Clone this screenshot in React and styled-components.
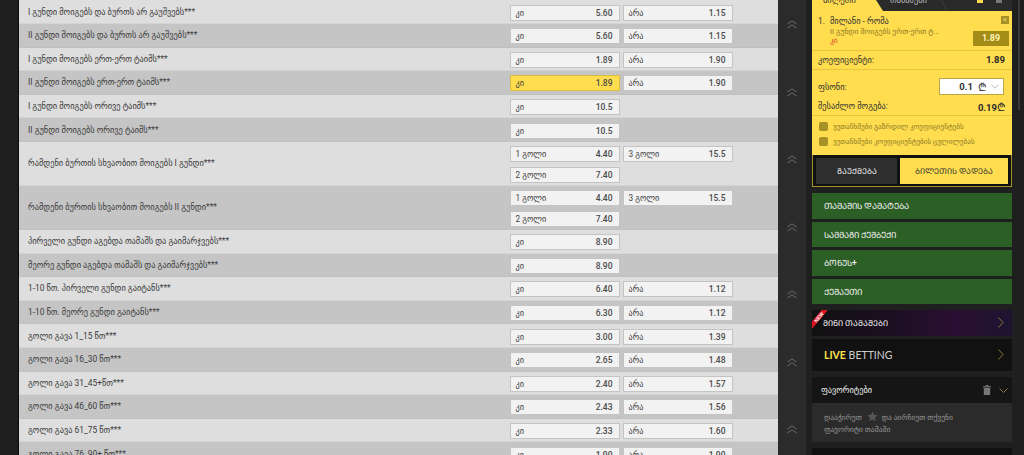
import React from 'react';
import styled, { createGlobalStyle } from 'styled-components';

const GlobalStyle = createGlobalStyle`
  html, body {
    margin: 0;
    padding: 0;
    height: 455px;
    overflow: hidden;
    background: #1f1f1f;
    font-family: Roboto, "DejaVu Sans", sans-serif;
  }
  * { box-sizing: border-box; }
`;

const Page = styled.div`
  display: flex;
  width: 1024px;
  height: 455px;
  overflow: hidden;
`;

const LeftRail = styled.div`
  width: 19px;
  flex: none;
  background: #1e1e1e;
  border-right: 1px solid #0c0c0c;
`;

const Table = styled.div`
  width: 759px;
  flex: none;
  padding-top: 0.4px;
`;

const Row = styled.div`
  display: flex;
  align-items: center;
  height: ${(p) => (p.$tall ? '44px' : '23.6px')};
  padding-top: 2px;
  background: ${(p) => (p.$dark ? '#c5c5c5' : '#dedede')};
  border-bottom: 1px solid ${(p) => (p.$dark ? '#c0c0c0' : '#d4d4d4')};
`;

const Title = styled.div`
  width: 490.5px;
  flex: none;
  padding: 0 0 2px 9px;
  font-size: 8.4px;
  color: #3c3c3c;
  white-space: nowrap;
`;

const Cells = styled.div`
  display: grid;
  grid-template-columns: 110px 110px;
  column-gap: 3px;
  row-gap: 4.5px;
`;

const Cell = styled.div`
  display: flex;
  align-items: center;
  justify-content: space-between;
  height: 16px;
  padding: 0 6px 0 5px;
  background: ${(p) => (p.$active ? '#ffdd4f' : '#f2f2f2')};
  border: 1px solid ${(p) => (p.$active ? '#d9bd45' : '#c4c4c4')};
  font-size: 8.2px;
  color: #444;
`;

const Odd = styled.span`
  font-size: 8.5px;
  font-weight: 500;
  color: #4a4a4a;
`;

const ArrowColumn = styled.div`
  width: 28px;
  flex: none;
  background: #2b2b2b;
  padding-top: 14px;
  display: flex;
  flex-direction: column;
`;

const ArrowSlot = styled.div`
  height: 67.5px;
  flex: none;
  padding-left: 9px;
  color: #5e5e5e;
`;

const Sidebar = styled.div`
  width: 218px;
  flex: none;
  display: flex;
  background: #1f1f1f;
`;

const SideColumn = styled.div`
  width: 200px;
  flex: none;
  margin-left: 6px;
  display: flex;
  flex-direction: column;
`;

const ScrollTrack = styled.div`
  width: 2px;
  height: 110px;
  flex: none;
  margin-left: 6px;
  background: #3a3a3a;
`;

const Tabs = styled.div`
  position: relative;
  height: 11px;
  flex: none;
  background: #2a2a2a;
  overflow: hidden;
`;

const TabYellow = styled.div`
  position: absolute;
  left: 0;
  top: 0;
  width: 71px;
  height: 11px;
  background: #ffdd4f;
  clip-path: polygon(0 0, 64px 0, 71px 100%, 0 100%);
`;

const TabDivider = styled.div`
  position: absolute;
  left: 129px;
  top: 0;
  width: 6px;
  height: 11px;
  background: #3c3c3c;
  clip-path: polygon(0 0, 1px 0, 6px 100%, 5px 100%);
`;

const TabLabel = styled.span`
  position: absolute;
  left: ${(p) => p.$left}px;
  top: -5px;
  font-size: 8.4px;
  color: ${(p) => p.$color};
  white-space: nowrap;
`;

const TabIcon = styled.span`
  position: absolute;
  left: ${(p) => p.$left}px;
  top: -3px;
  width: 6px;
  height: 6px;
  background: ${(p) => p.$color};
`;

const Slip = styled.div`
  background: #ffdd4f;
  color: #333;
  flex: none;
`;

const SlipItem = styled.div`
  position: relative;
  height: 39.5px;
  padding: 5px 6px 0;
  border-bottom: 1px solid #e6c53f;
  font-size: 8.4px;
  white-space: nowrap;
`;

const Match = styled.div`
  display: flex;
  gap: 5px;
  color: #333;
`;

const Market = styled.div`
  padding-left: 12px;
  margin-top: 1px;
  font-size: 7.6px;
  color: #8d7a24;
`;

const Pick = styled.div`
  padding-left: 12px;
  font-size: 7.6px;
  color: #d8452a;
`;

const Remove = styled.span`
  position: absolute;
  right: 3px;
  top: 5px;
  width: 8px;
  height: 8px;
  background: #a79127;
  color: #e8d16a;
  font-size: 8px;
  line-height: 8px;
  text-align: center;
`;

const SlipOdd = styled.span`
  position: absolute;
  right: 3px;
  top: 20px;
  width: 36px;
  height: 15px;
  background: #a38c17;
  color: #fff2b5;
  font-size: 9px;
  font-weight: 700;
  line-height: 15px;
  text-align: center;
`;

const SlipLine = styled.div`
  display: flex;
  align-items: center;
  justify-content: space-between;
  height: ${(p) => p.$h}px;
  padding: ${(p) => p.$pt || 0}px 7px 0 6px;
  border-bottom: ${(p) => (p.$line ? '1px solid #e6c53f' : 'none')};
  font-size: 8.4px;
  color: #333;
`;

const Strong = styled.span`
  font-size: 9.5px;
  font-weight: 700;
  color: #2a2a2a;
`;

const Lari = styled.span`
  font-family: "DejaVu Sans", sans-serif;
  font-size: 11px;
  font-weight: 400;
`;

const StakeBox = styled.div`
  display: flex;
  align-items: center;
  width: 65px;
  height: 17px;
  margin-right: 1px;
  padding: 0 4px;
  background: #fff;
  border: 1px solid #b9a54a;
  font-size: 9.5px;
  font-weight: 700;
  color: #333;
`;

const StakeValue = styled.span`
  flex: 1;
  text-align: right;
  margin-right: 5px;
`;

const StakeGap = styled.span`
  width: 5px;
`;

const Terms = styled.div`
  display: flex;
  flex-direction: column;
  gap: 6px;
  height: 40px;
  padding: 6px 0 0 7px;
  border-top: 1px solid #e6c53f;
`;

const Term = styled.div`
  display: flex;
  align-items: center;
  gap: 5px;
  height: 9px;
  font-size: 7.2px;
  color: #8d7a24;
  white-space: nowrap;
`;

const Check = styled.span`
  width: 9px;
  height: 9px;
  flex: none;
  border-radius: 2px;
  background: #a79127;
`;

const SlipActions = styled.div`
  display: flex;
  gap: 3px;
  height: 32px;
  padding: 3px 3px 2px;
  background: #111;
  border: 1px solid #a79127;
  border-top: none;
  flex: none;
`;

const ActionButton = styled.div`
  flex: ${(p) => (p.$primary ? '108' : '81')};
  display: flex;
  align-items: center;
  justify-content: center;
  background: ${(p) => (p.$primary ? '#ffdd4f' : '#2e2e2e')};
  color: ${(p) => (p.$primary ? '#333' : '#eee')};
  font-size: 8px;
  font-weight: 500;
`;

const GreenList = styled.div`
  display: flex;
  flex-direction: column;
  gap: 3.1px;
  margin-top: 6.5px;
`;

const GreenButton = styled.div`
  height: 25.5px;
  display: flex;
  align-items: center;
  padding-left: 12px;
  background: #2c5f26;
  color: #f2f2f2;
  font-size: 8.5px;
  font-weight: 500;
`;

const Banner = styled.div`
  position: relative;
  display: flex;
  align-items: center;
  justify-content: space-between;
  height: ${(p) => p.$h}px;
  margin-top: ${(p) => p.$mt}px;
  padding: 0 8px 0 ${(p) => p.$pl}px;
  background: ${(p) => p.$bg};
  overflow: hidden;
  flex: none;
`;

const BannerText = styled.span`
  color: #f4f4f4;
  font-size: 8px;
  font-weight: 500;
`;

const LiveText = styled.span`
  color: #cfcfcf;
  font-family: Lato, sans-serif;
  font-size: 10.5px;
`;

const LiveAccent = styled.b`
  color: #ffe14d;
`;

const NewRibbon = styled.div`
  position: absolute;
  left: 0;
  top: 0;
  width: 16px;
  height: 19px;
  background: #e01522;
  clip-path: polygon(0 62%, 0 100%, 100% 0, 62% 0);
`;

const NewLabel = styled.span`
  position: absolute;
  left: 1px;
  top: 4px;
  font-family: "Liberation Sans", sans-serif;
  font-size: 5px;
  font-weight: 700;
  color: #fff;
  transform: rotate(-50deg);
`;

const FavHeader = styled.div`
  display: flex;
  align-items: center;
  height: 25.5px;
  margin-top: 6.5px;
  padding: 0 4px 0 9px;
  background: #151515;
  color: #eee;
  font-size: 8.3px;
  flex: none;
`;

const FavTitle = styled.span`
  flex: 1;
`;

const FavBody = styled.div`
  height: 39px;
  padding: 8px 12px 0;
  background: #2b2b2b;
  color: #999;
  font-size: 7.6px;
  line-height: 12px;
  white-space: nowrap;
  flex: none;
`;

const FavStar = styled.svg`
  margin: 0 4px 0 5px;
  vertical-align: -2px;
`;

const FavBottom = styled.div`
  height: 20px;
  margin-top: 6px;
  background: #111;
  flex: none;
`;

const TrashIcon = styled.svg`
  margin-right: 8px;
`;

const DoubleUp = () => (
  <svg width="10" height="9" viewBox="0 0 10 9" fill="none" stroke="currentColor" strokeWidth="1.1">
    <path d="M0.5 4 L5 0.8 L9.5 4" />
    <path d="M0.5 8 L5 4.8 L9.5 8" />
  </svg>
);

const Chevron = ({ color }) => (
  <svg width="6" height="11" viewBox="0 0 6 11" fill="none" stroke={color} strokeWidth="1">
    <path d="M0.5 0.5 L5 5.5 L0.5 10.5" />
  </svg>
);

const ChevronDown = ({ color, w = 9 }) => (
  <svg width={w} height="5" viewBox="0 0 9 5" fill="none" stroke={color} strokeWidth="1">
    <path d="M0.5 0.5 L4.5 4.5 L8.5 0.5" />
  </svg>
);

const Trash = () => (
  <TrashIcon width="8" height="10" viewBox="0 0 8 10" fill="#777">
    <rect x="0" y="1.2" width="8" height="1.2" />
    <rect x="2.5" y="0" width="3" height="1.2" />
    <rect x="0.8" y="3" width="6.4" height="7" />
  </TrashIcon>
);

const Star = () => (
  <FavStar width="11" height="11" viewBox="0 0 24 24" fill="#555">
    <path d="M12 1l3.4 7.2 7.8 1-5.7 5.4 1.5 7.8L12 18.6l-7 3.8 1.5-7.8L.8 9.2l7.8-1z" />
  </FavStar>
);

const yesNo = (a, b) => [['კი', a], ['არა', b]];
const goals = [['1 გოლი', '4.40'], ['3 გოლი', '15.5'], ['2 გოლი', '7.40']];

const rows = [
  { title: 'I გუნდი მოიგებს და ბურთს არ გაუშვებს***', cells: yesNo('5.60', '1.15') },
  { title: 'II გუნდი მოიგებს და ბურთს არ გაუშვებს***', cells: yesNo('5.60', '1.15') },
  { title: 'I გუნდი მოიგებს ერთ-ერთ ტაიმს***', cells: yesNo('1.89', '1.90') },
  { title: 'II გუნდი მოიგებს ერთ-ერთ ტაიმს***', cells: yesNo('1.89', '1.90'), active: 0 },
  { title: 'I გუნდი მოიგებს ორივე ტაიმს***', cells: [['კი', '10.5']] },
  { title: 'II გუნდი მოიგებს ორივე ტაიმს***', cells: [['კი', '10.5']] },
  { title: 'რამდენი ბურთის სხვაობით მოიგებს I გუნდი***', cells: goals, tall: true },
  { title: 'რამდენი ბურთის სხვაობით მოიგებს II გუნდი***', cells: goals, tall: true },
  { title: 'პირველი გუნდი აგებდა თამაშს და გაიმარჯვებს***', cells: [['კი', '8.90']] },
  { title: 'მეორე გუნდი აგებდა თამაშს და გაიმარჯვებს***', cells: [['კი', '8.90']] },
  { title: '1-10 წთ. პირველი გუნდი გაიტანს***', cells: yesNo('6.40', '1.12') },
  { title: '1-10 წთ. მეორე გუნდი გაიტანს***', cells: yesNo('6.30', '1.12') },
  { title: 'გოლი გავა 1_15 წთ***', cells: yesNo('3.00', '1.39') },
  { title: 'გოლი გავა 16_30 წთ***', cells: yesNo('2.65', '1.48') },
  { title: 'გოლი გავა 31_45+წთ***', cells: yesNo('2.40', '1.57') },
  { title: 'გოლი გავა 46_60 წთ***', cells: yesNo('2.43', '1.56') },
  { title: 'გოლი გავა 61_75 წთ***', cells: yesNo('2.33', '1.60') },
  { title: 'გოლი გავა 76_90+ წთ***', cells: yesNo('1.90', '1.90') },
];

// Mtavruli capitals, the reference sets these labels in them
const green = ['ᲗᲐᲛᲐᲨᲘᲡ ᲓᲐᲛᲐᲢᲔᲑᲐ', 'ᲡᲐᲛᲛᲐᲒᲘ ᲥᲔᲨᲑᲔᲥᲘ', 'ᲑᲝᲜᲣᲡ+', 'ᲥᲔᲨᲐᲣᲗᲘ'];

export default function App() {
  return (
    <Page>
      <GlobalStyle />
      <LeftRail />
      <Table>
        {rows.map((row, i) => (
          <Row key={row.title} $dark={i % 2 === 1} $tall={row.tall}>
            <Title>{row.title}</Title>
            <Cells>
              {row.cells.map(([label, odd], c) => (
                <Cell key={label} $active={row.active === c}>
                  <span>{label}</span>
                  <Odd>{odd}</Odd>
                </Cell>
              ))}
            </Cells>
          </Row>
        ))}
      </Table>
      <ArrowColumn>
        {[0, 1, 2, 3, 4, 5, 6].map((n) => (
          <ArrowSlot key={n}>
            <DoubleUp />
          </ArrowSlot>
        ))}
      </ArrowColumn>
      <Sidebar>
        <SideColumn>
          <Tabs>
            <TabYellow />
            <TabDivider />
            <TabLabel $left={11} $color="#333">ბილეთი</TabLabel>
            <TabLabel $left={78} $color="#bbb">თამაშები</TabLabel>
            <TabIcon $left={165} $color="#ffdd4f" />
            <TabIcon $left={184} $color="#777" />
          </Tabs>
          <Slip>
            <SlipItem>
              <Match>
                <span>1.</span>
                <span>მილანი - რომა</span>
              </Match>
              <Market>II გუნდი მოიგებს ერთ-ერთ ტ...</Market>
              <Pick>კი</Pick>
              <Remove>×</Remove>
              <SlipOdd>1.89</SlipOdd>
            </SlipItem>
            <SlipLine $h={19} $line>
              <span>კოეფიციენტი:</span>
              <Strong>1.89</Strong>
            </SlipLine>
            <SlipLine $h={28} $pt={6}>
              <span>ფსონი:</span>
              <StakeBox>
                <StakeValue>0.1</StakeValue>
                <Lari>₾</Lari>
                <StakeGap />
                <ChevronDown color="#aaa" w={8} />
              </StakeBox>
            </SlipLine>
            <SlipLine $h={17}>
              <span>შესაძლო მოგება:</span>
              <Strong>0.19<Lari>₾</Lari></Strong>
            </SlipLine>
            <Terms>
              <Term><Check />ვეთანხმები გაზრდილ კოეფიციენტებს</Term>
              <Term><Check />ვეთანხმები კოეფიციენტების ცვლილებას</Term>
            </Terms>
          </Slip>
          <SlipActions>
            <ActionButton>ᲒᲐᲣᲥᲛᲔᲑᲐ</ActionButton>
            <ActionButton $primary>ᲑᲘᲚᲔᲗᲘᲡ ᲓᲐᲓᲔᲑᲐ</ActionButton>
          </SlipActions>
          <GreenList>
            {green.map((label) => (
              <GreenButton key={label}>{label}</GreenButton>
            ))}
          </GreenList>
          <Banner $h={26} $mt={5.5} $pl={11} $bg="linear-gradient(90deg, #111 0%, #1c0f22 40%, #2a0f33 72%, #1d1430 100%)">
            <NewRibbon />
            <NewLabel>NEW</NewLabel>
            <BannerText>ᲛᲘᲜᲘ ᲗᲐᲛᲐᲨᲔᲑᲘ</BannerText>
            <Chevron color="#8a7a3a" />
          </Banner>
          <Banner $h={32} $mt={3} $pl={12} $bg="#111">
            <LiveText><LiveAccent>LIVE</LiveAccent> BETTING</LiveText>
            <Chevron color="#8a7a3a" />
          </Banner>
          <FavHeader>
            <FavTitle>ფავორიტები</FavTitle>
            <Trash />
            <ChevronDown color="#8a7a3a" />
          </FavHeader>
          <FavBody>
            დააჭირეთ<Star />და აირჩიეთ თქვენი
            <br />
            ფავორიტი თამაში
          </FavBody>
          <FavBottom />
        </SideColumn>
        <ScrollTrack />
      </Sidebar>
    </Page>
  );
}
